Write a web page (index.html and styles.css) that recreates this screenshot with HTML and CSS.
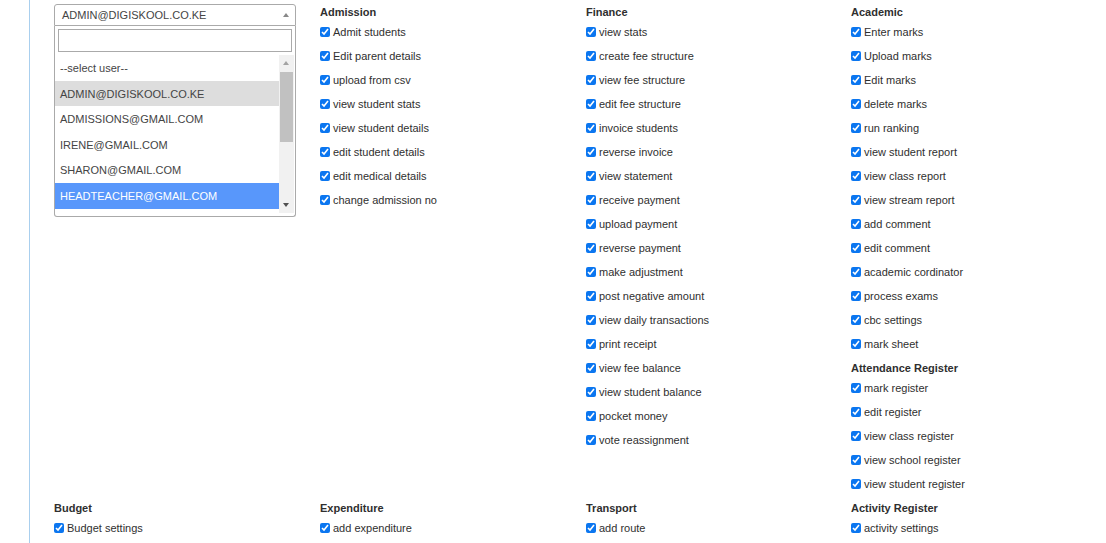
FILE: index.html
```html
<!DOCTYPE html>
<html>
<head>
<meta charset="utf-8">
<link rel="stylesheet" href="styles.css">
</head>
<body>
<div class="page">
  <div class="grid">
    <div class="cell">
      <div class="picker">
        <div class="sel">
          <span class="sel-text">ADMIN@DIGISKOOL.CO.KE</span>
          <span class="sel-arrow"></span>
        </div>
        <div class="drop">
          <div class="search-wrap"><div class="search"></div></div>
          <div class="list">
            <div class="opts">
              <div class="opt">--select user--</div>
              <div class="opt opt-sel">ADMIN@DIGISKOOL.CO.KE</div>
              <div class="opt">ADMISSIONS@GMAIL.COM</div>
              <div class="opt">IRENE@GMAIL.COM</div>
              <div class="opt">SHARON@GMAIL.COM</div>
              <div class="opt opt-hi">HEADTEACHER@GMAIL.COM</div>
            </div>
            <div class="sbar">
              <span class="sb-up"></span>
              <span class="sb-thumb"></span>
              <span class="sb-down"></span>
            </div>
          </div>
        </div>
      </div>
    </div>

    <div class="cell">
      <div class="head">Admission</div>
      <label class="item"><input type="checkbox" checked>Admit students</label>
      <label class="item"><input type="checkbox" checked>Edit parent details</label>
      <label class="item"><input type="checkbox" checked>upload from csv</label>
      <label class="item"><input type="checkbox" checked>view student stats</label>
      <label class="item"><input type="checkbox" checked>view student details</label>
      <label class="item"><input type="checkbox" checked>edit student details</label>
      <label class="item"><input type="checkbox" checked>edit medical details</label>
      <label class="item"><input type="checkbox" checked>change admission no</label>
    </div>

    <div class="cell">
      <div class="head">Finance</div>
      <label class="item"><input type="checkbox" checked>view stats</label>
      <label class="item"><input type="checkbox" checked>create fee structure</label>
      <label class="item"><input type="checkbox" checked>view fee structure</label>
      <label class="item"><input type="checkbox" checked>edit fee structure</label>
      <label class="item"><input type="checkbox" checked>invoice students</label>
      <label class="item"><input type="checkbox" checked>reverse invoice</label>
      <label class="item"><input type="checkbox" checked>view statement</label>
      <label class="item"><input type="checkbox" checked>receive payment</label>
      <label class="item"><input type="checkbox" checked>upload payment</label>
      <label class="item"><input type="checkbox" checked>reverse payment</label>
      <label class="item"><input type="checkbox" checked>make adjustment</label>
      <label class="item"><input type="checkbox" checked>post negative amount</label>
      <label class="item"><input type="checkbox" checked>view daily transactions</label>
      <label class="item"><input type="checkbox" checked>print receipt</label>
      <label class="item"><input type="checkbox" checked>view fee balance</label>
      <label class="item"><input type="checkbox" checked>view student balance</label>
      <label class="item"><input type="checkbox" checked>pocket money</label>
      <label class="item"><input type="checkbox" checked>vote reassignment</label>
    </div>

    <div class="cell">
      <div class="head">Academic</div>
      <label class="item"><input type="checkbox" checked>Enter marks</label>
      <label class="item"><input type="checkbox" checked>Upload marks</label>
      <label class="item"><input type="checkbox" checked>Edit marks</label>
      <label class="item"><input type="checkbox" checked>delete marks</label>
      <label class="item"><input type="checkbox" checked>run ranking</label>
      <label class="item"><input type="checkbox" checked>view student report</label>
      <label class="item"><input type="checkbox" checked>view class report</label>
      <label class="item"><input type="checkbox" checked>view stream report</label>
      <label class="item"><input type="checkbox" checked>add comment</label>
      <label class="item"><input type="checkbox" checked>edit comment</label>
      <label class="item"><input type="checkbox" checked>academic cordinator</label>
      <label class="item"><input type="checkbox" checked>process exams</label>
      <label class="item"><input type="checkbox" checked>cbc settings</label>
      <label class="item"><input type="checkbox" checked>mark sheet</label>
      <div class="head">Attendance Register</div>
      <label class="item"><input type="checkbox" checked>mark register</label>
      <label class="item"><input type="checkbox" checked>edit register</label>
      <label class="item"><input type="checkbox" checked>view class register</label>
      <label class="item"><input type="checkbox" checked>view school register</label>
      <label class="item"><input type="checkbox" checked>view student register</label>
    </div>

    <div class="cell">
      <div class="head">Budget</div>
      <label class="item"><input type="checkbox" checked>Budget settings</label>
    </div>
    <div class="cell">
      <div class="head">Expenditure</div>
      <label class="item"><input type="checkbox" checked>add expenditure</label>
    </div>
    <div class="cell">
      <div class="head">Transport</div>
      <label class="item"><input type="checkbox" checked>add route</label>
    </div>
    <div class="cell">
      <div class="head">Activity Register</div>
      <label class="item"><input type="checkbox" checked>activity settings</label>
    </div>
  </div>
</div>
</body>
</html>
```

FILE: styles.css
```css
html, body {
  margin: 0;
  padding: 0;
  height: 100%;
  overflow: hidden;
  background: #fff;
}
body {
  font-family: "Liberation Sans", Arial, sans-serif;
  font-size: 11px;
  color: #2f2f2f;
}
.page {
  margin-left: 29px;
  border-left: 1px solid #a9cfee;
  padding-left: 24px;
  padding-top: 2px;
  height: 100%;
  box-sizing: border-box;
}
.grid {
  display: grid;
  grid-template-columns: 266px 266px 265px 1fr;
}
.head {
  font-weight: bold;
  height: 20px;
  line-height: 20px;
  color: #2f2f2f;
}
.item {
  display: flex;
  align-items: center;
  height: 20px;
  margin-bottom: 4px;
  line-height: 20px;
}
.item input {
  width: 10px;
  height: 10px;
  margin: 0 3px 0 0;
  accent-color: #0b76f0;
}

/* select2-like picker */
.picker {
  position: relative;
  width: 242px;
  margin-top: 2px;
}
.sel {
  height: 22px;
  box-sizing: border-box;
  border: 1px solid #aaa;
  border-radius: 3px 3px 0 0;
  display: flex;
  align-items: center;
  padding: 0 0 0 7px;
  color: #444;
  background: #fff;
}
.sel-text {
  flex: 1;
  font-size: 11px;
}
.sel-arrow {
  width: 0;
  height: 0;
  border-style: solid;
  border-width: 0 3px 4px 3px;
  border-color: transparent transparent #888 transparent;
  margin-right: 6px;
}
.drop {
  position: absolute;
  left: 0;
  top: 22px;
  width: 242px;
  box-sizing: border-box;
  border: 1px solid #aaa;
  border-top: none;
  border-radius: 0 0 3px 3px;
  background: #fff;
  height: 191px;
  overflow: hidden;
}
.search-wrap {
  padding: 3px 3px 3px 3px;
}
.search {
  height: 23px;
  box-sizing: border-box;
  border: 1px solid #aaa;
}
.list {
  display: flex;
  height: 158px;
  overflow: hidden;
}
.opts {
  flex: 1;
}
.opt {
  height: 25.6px;
  box-sizing: border-box;
  padding-top: 2px;
  line-height: 23.6px;
  padding-left: 5px;
  color: #444;
  white-space: nowrap;
}
.opt-sel {
  background: #ddd;
}
.opt-hi {
  background: #5897fb;
  color: #fff;
}
.sbar {
  width: 15px;
  background: #f1f1f1;
  display: flex;
  flex-direction: column;
  align-items: center;
  margin-right: 1px;
}
.sb-up, .sb-down {
  display: block;
  height: 17px;
  width: 15px;
  position: relative;
}
.sb-up::after, .sb-down::after {
  content: "";
  position: absolute;
  left: 4px;
  width: 0;
  height: 0;
  border-style: solid;
}
.sb-up::after {
  top: 6px;
  border-width: 0 3.5px 4px 3.5px;
  border-color: transparent transparent #a3a3a3 transparent;
}
.sb-down::after {
  top: 7px;
  border-width: 4px 3.5px 0 3.5px;
  border-color: #505050 transparent transparent transparent;
}
.sb-thumb {
  display: block;
  width: 13px;
  height: 70px;
  background: #c1c1c1;
}
.sb-down {
  margin-top: auto;
}
```
